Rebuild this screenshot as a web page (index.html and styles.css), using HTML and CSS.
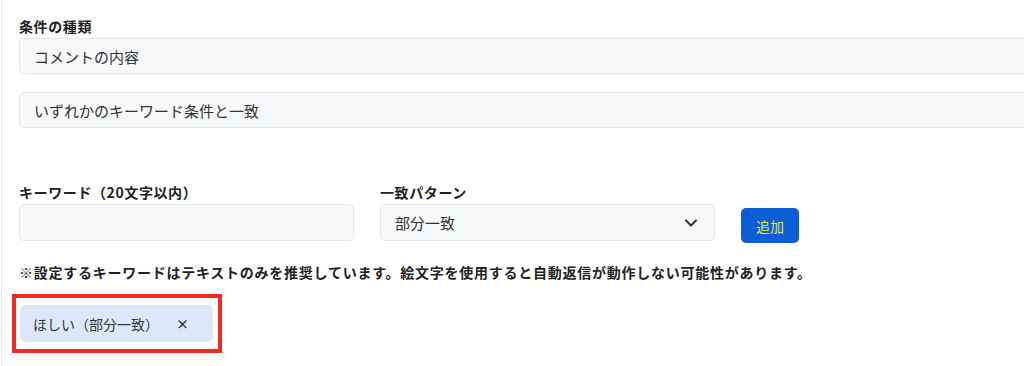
FILE: index.html
```html
<!DOCTYPE html>
<html lang="ja">

<head>
  <meta charset="UTF-8" />
  <title>自動返信の条件</title>
  <link rel="stylesheet" href="styles.css">
</head>

<body>
  <div class="page">
    <!-- 条件の種類 -->
    <div class="group">
      <div class="label">条件の種類</div>
      <div class="field wide">コメントの内容</div>
      <div class="field wide">いずれかのキーワード条件と一致</div>
    </div>

    <!-- キーワード入力 -->
    <div class="row">
      <div class="col">
        <div class="label">キーワード（20文字以内）</div>
        <input type="text" class="field" />
      </div>
      <div class="col">
        <div class="label">一致パターン</div>
        <div class="field select">
          <span>部分一致</span>
          <svg width="14" height="14" viewBox="0 0 14 14">
            <path d="M2 4.5 L7 9.5 L12 4.5" fill="none" stroke="#333" stroke-width="2" stroke-linecap="round" stroke-linejoin="round" />
          </svg>
        </div>
      </div>
      <button class="add">追加</button>
    </div>

    <p class="note">※設定するキーワードはテキストのみを推奨しています。絵文字を使用すると自動返信が動作しない可能性があります。</p>

    <div class="mark">
      <span class="chip">ほしい（部分一致）<span class="remove">×</span></span>
    </div>
  </div>
</body>

</html>
```

FILE: styles.css
```css
html,
body {
  margin: 0;
  padding: 0;
  background-color: #fff;
  overflow: hidden;
}

body {
  font-family: "Noto Sans CJK JP", "Noto Sans", sans-serif;
  color: #333;
}

.page {
  height: 366px;
  margin-left: 1px;
  padding: 16px 0 0 17px;
  border-left: 1px solid #ececec;
  box-sizing: border-box;
}

.label {
  height: 20px;
  line-height: 20px;
  margin-bottom: 2px;
  font-size: 14px;
  font-weight: bold;
  letter-spacing: 0.6px;
  color: #222;
}

.field {
  display: flex;
  align-items: center;
  height: 36px;
  padding: 0 14px;
  box-sizing: border-box;
  background-color: #f7f8fa;
  border: 1px solid #e2e5ea;
  border-radius: 5px;
  font-family: inherit;
  font-size: 15px;
  color: #333;
  outline: none;
}

.wide {
  width: 1040px;
  margin-bottom: 18px;
}

.group {
  margin-bottom: 54px;
}

.row {
  display: flex;
  gap: 26px;
}

.row .field {
  width: 335px;
  height: 37px;
}

.select {
  justify-content: space-between;
  padding-right: 16px;
}

.select svg {
  display: block;
}

.add {
  width: 58px;
  height: 35px;
  margin-top: 26px;
  border: none;
  border-radius: 5px;
  background-color: #0d5dd6;
  color: #e6e24c;
  font-family: inherit;
  font-size: 14px;
}

.note {
  margin: 19px 0 12px;
  line-height: 20px;
  font-size: 14px;
  font-weight: bold;
  letter-spacing: 0.75px;
  color: #222;
}

.mark {
  display: inline-block;
  margin-left: -7px;
  padding: 7px 5px 7px 4px;
  border: 4px solid #ee2a24;
}

.chip {
  display: flex;
  align-items: center;
  width: 193px;
  height: 37px;
  padding-left: 13px;
  box-sizing: border-box;
  background-color: #dce8f9;
  border-radius: 5px;
  font-size: 14px;
  color: #333;
}

.remove {
  margin-left: 17px;
  font-size: 13px;
  font-weight: bold;
  color: #333;
}
```
